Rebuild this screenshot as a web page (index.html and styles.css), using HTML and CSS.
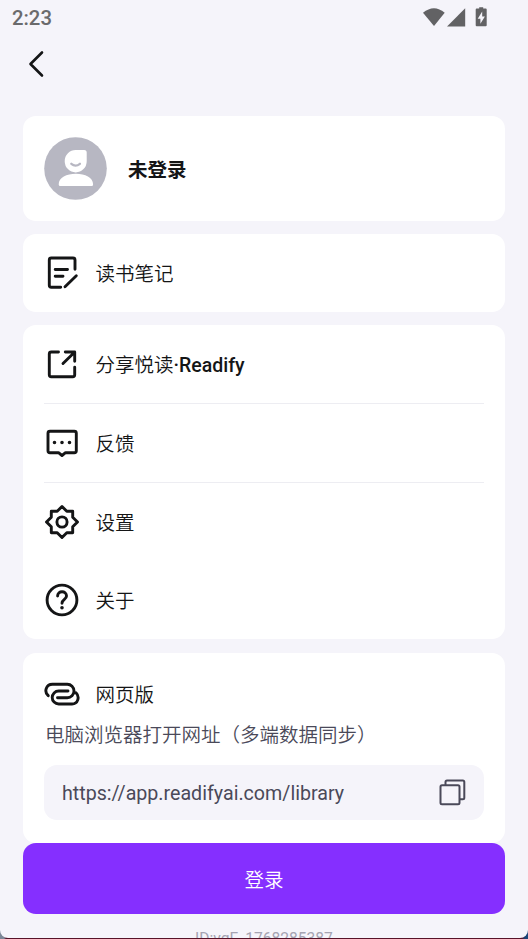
FILE: index.html
```
<!DOCTYPE html>
<html lang="zh-CN">
<head>
<meta charset="utf-8">
<title>悦读</title>
<link rel="stylesheet" href="styles.css">
</head>
<body>
<div class="screen">
  <header class="status">
    <span class="clock">2:23</span>
    <svg class="status-icons" viewBox="0 0 68 24">
      <path d="M1 8.800Q12 -.4 22.700 8.800L12 22z"/>
      <path d="M43.200 4.300V22.500H25z"/>
      <path fill-rule="evenodd" d="M57.200 3.200h4v1.400h2.500q1 0 1 1v15.600q0 1-1 1h-9q-1 0-1-1v-15.600q0-1 1-1h2.500zM60.200 7.500l-4.500 7.200h2.700v5.100l4.500-7.300h-2.700z"/>
    </svg>
  </header>
  <nav class="nav">
    <svg class="back" viewBox="0 0 36 36"><path d="M24 6.500 12.500 18 24 29.500"/></svg>
  </nav>
  <main class="content">
    <section class="card profile">
      <svg class="avatar" viewBox="0 0 63 63">
        <circle class="disc" cx="31.500" cy="31.500" r="31.300"/>
        <path class="person" d="M31.700 13h8.500q2.500 0 2.500 2.500v8.700a11 11.200 0 1 1-11-11.200zM14.700 47.500c0-7 8-10.700 17.200-10.700s17.200 3.700 17.200 10.700q0 1.500-1.500 1.500h-31.400q-1.500 0-1.500-1.500z"/>
        <path class="smile" d="M27.300 26.800q4.200 3.600 8.600 0"/>
      </svg>
      <span class="name">未登录</span>
    </section>
    <section class="card list">
      <div class="row">
        <svg class="icon" viewBox="0 0 36 36"><path d="M31 14.300V5q0-2-2-2H7.300q-2 0-2 2v25.300q0 2 2 2h9.400M21 31.700l11.300-11M11.200 14.500h12.300M11.200 21.200H19"/></svg>
        <span>读书笔记</span>
      </div>
    </section>
    <section class="card list">
      <div class="row divided">
        <svg class="icon" viewBox="0 0 36 36"><path d="M14.500 6H7.300q-2 0-2 2v20.700q0 2 2 2h21.400q2 0 2-2v-7.400M21.300 6h9.400v9.300M30 6.700 19 17.500"/></svg>
        <span>分享悦读<b>·Readify</b></span>
      </div>
      <div class="row divided">
        <svg class="icon" viewBox="0 0 36 36"><path d="M6 6.300h24.300q2 0 2 2v17.400q0 2-2 2h-8.800L18 30.500l-3.500-2.800H6q-2 0-2-2V8.300q0-2 2-2z"/><path class="dots" d="M10.500 17.500h0M18 17.500h0M25.500 17.500h0"/></svg>
        <span>反馈</span>
      </div>
      <div class="row">
        <svg class="icon" viewBox="0 0 36 36"><path d="m18 2.500 4.800 4.800h5.900v5.900l4.800 4.800-4.800 4.800v5.900h-5.900L18 33.500l-4.800-4.800H7.300v-5.900L2.500 18l4.800-4.800V7.300h5.900z"/><circle cx="18" cy="18" r="5.100"/></svg>
        <span>设置</span>
      </div>
      <div class="row">
        <svg class="icon" viewBox="0 0 36 36"><circle cx="18" cy="18" r="14.900"/><path d="M13.600 14c0-5.700 8.900-5.700 8.900 0 0 3.500-4.500 3.200-4.500 7.300"/><path class="dots" d="M18 25.800h0"/></svg>
        <span>关于</span>
      </div>
    </section>
    <section class="card web">
      <div class="web-title">
        <svg class="icon" viewBox="0 0 36 36"><path d="M4.200 19.700C-.2 15.800 2 8.300 8.500 8.300h14.800a6.700 6.700 0 0 1 0 13.400H13.500M32 16.700c4 4 2 11.300-4 11.300H14.700a6.500 6.500 0 0 1 0-13H24"/></svg>
        <span>网页版</span>
      </div>
      <p class="hint">电脑浏览器打开网址（多端数据同步）</p>
      <div class="url">
        <span>https://app.readifyai.com/library</span>
        <svg class="copy" viewBox="0 0 36 36"><path d="M8 11.300h16q1.500 0 1.500 1.500v16q0 1.500-1.500 1.500H8q-1.500 0-1.500-1.500v-16q0-1.500 1.500-1.500zM11.500 11V8q0-1.500 1.500-1.500h15.800q1.500 0 1.500 1.500v15.800q0 1.500-1.500 1.500H26"/></svg>
      </div>
    </section>
    <button class="login">登录</button>
    <p class="uid">ID:vgF_1768285387</p>
  </main>
</div>
</body>
</html>
```

FILE: styles.css
```
* { box-sizing: border-box; }
body {
  margin: 0;
  height: 939px;
  overflow: hidden;
  background: linear-gradient(90deg, #7c8797 0 4px, #571329 6px 522px, #194477 525px);
  font-family: Roboto, "Noto Sans CJK SC", sans-serif;
  font-size: 19.5px;
  color: #141516;
}
p { margin: 0; }
svg { display: block; flex: none; }
.screen {
  height: 938px;
  overflow: hidden;
  background: #f5f4fa;
  border-radius: 0 0 8px 8px;
}
.status {
  height: 36px;
  display: flex;
  justify-content: space-between;
  padding: 4px 38px 0 12px;
  color: #6a6a6c;
}
.clock { font-size: 20.3px; line-height: 29px; font-weight: 500; }
.status-icons { width: 68px; height: 24px; fill: #626264; }
.nav { height: 80px; padding: 10px 18px; }
.back {
  width: 36px;
  height: 36px;
  fill: none;
  stroke: #141516;
  stroke-width: 2.6;
  stroke-linecap: round;
  stroke-linejoin: round;
}
.content {
  display: flex;
  flex-direction: column;
  padding: 0 23.5px 0 23.4px;
}
.card {
  background: #fff;
  border-radius: 13px;
  margin-bottom: 13px;
  padding: 0 20.5px 0 20.6px;
}
.profile {
  height: 104.5px;
  margin-bottom: 13.5px;
  display: flex;
  align-items: center;
  gap: 21px;
}
.avatar { width: 63px; height: 63px; }
.disc { fill: #b7b7c2; }
.person { fill: #fff; }
.smile { fill: none; stroke: #b7b7c2; stroke-width: 2.3; stroke-linecap: round; }
.name { font-weight: 700; }
.row {
  height: 78px;
  display: flex;
  align-items: center;
  gap: 15.5px;
}
.row span, .web-title span { padding-bottom: 2px; font-weight: 350; }
.divided { height: 79px; border-bottom: 1px solid #ededf2; }
.row b { font-weight: 500; }
.icon {
  width: 36px;
  height: 36px;
  fill: none;
  stroke: #141516;
  stroke-width: 2.9;
  stroke-linecap: round;
  stroke-linejoin: round;
}
.icon .dots { stroke-width: 3.6; }
.web { height: 190px; margin: 1px 0 0; padding-top: 23px; }
.web-title { height: 36px; display: flex; align-items: center; gap: 15.5px; }
.hint { color: #4a4959; line-height: 28px; margin-top: 10px; padding-left: 1px; white-space: nowrap; font-weight: 350; }
.url {
  height: 55px;
  margin-top: 15px;
  padding: 0 14px 0 18px;
  border-radius: 13px;
  background: #f5f4fa;
  display: flex;
  align-items: center;
  justify-content: space-between;
  font-size: 19.65px;
  color: #4a4959;
}
.url span { padding-top: 2px; }
.copy { width: 36px; height: 36px; margin-bottom: 1px; fill: none; stroke: #4a4959; stroke-width: 2; }
.login {
  height: 70.5px;
  border: 0;
  border-radius: 13px;
  background: #852fff;
  color: #fff;
  font: inherit;
  font-weight: 350;
}
.uid {
  margin-top: 14px;
  text-align: center;
  font-size: 15.6px;
  line-height: 22px;
  color: #a5a4b2;
}
```
